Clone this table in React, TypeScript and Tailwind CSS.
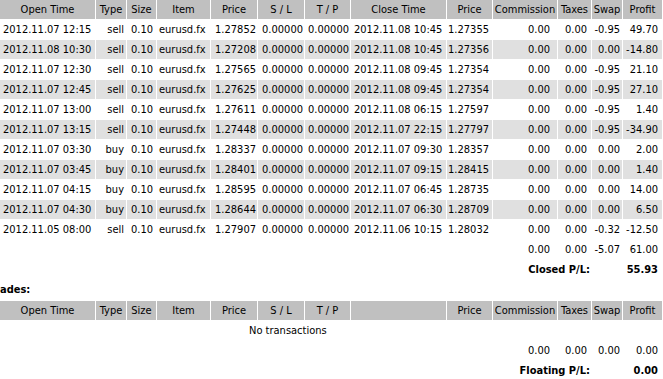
const cols =
  'grid grid-cols-[95px_30px_29px_53px_46px_46px_45px_95px_45px_64px_33px_30px_39px] gap-[1px]'

const headers = [
  'Open Time',
  'Type',
  'Size',
  'Item',
  'Price',
  'S / L',
  'T / P',
  'Close Time',
  'Price',
  'Commission',
  'Taxes',
  'Swap',
  'Profit'
]

// open, type, open price, close time, close price, swap, profit
const closed: string[][] = [
  ['2012.11.07 12:15', 'sell', '1.27852', '2012.11.08 10:45', '1.27355', '-0.95', '49.70'],
  ['2012.11.08 10:30', 'sell', '1.27208', '2012.11.08 10:45', '1.27356', '0.00', '-14.80'],
  ['2012.11.07 12:30', 'sell', '1.27565', '2012.11.08 09:45', '1.27354', '-0.95', '21.10'],
  ['2012.11.07 12:45', 'sell', '1.27625', '2012.11.08 09:45', '1.27354', '-0.95', '27.10'],
  ['2012.11.07 13:00', 'sell', '1.27611', '2012.11.08 06:15', '1.27597', '-0.95', '1.40'],
  ['2012.11.07 13:15', 'sell', '1.27448', '2012.11.07 22:15', '1.27797', '-0.95', '-34.90'],
  ['2012.11.07 03:30', 'buy', '1.28337', '2012.11.07 09:30', '1.28357', '0.00', '2.00'],
  ['2012.11.07 03:45', 'buy', '1.28401', '2012.11.07 09:15', '1.28415', '0.00', '1.40'],
  ['2012.11.07 04:15', 'buy', '1.28595', '2012.11.07 06:45', '1.28735', '0.00', '14.00'],
  ['2012.11.07 04:30', 'buy', '1.28644', '2012.11.07 06:30', '1.28709', '0.00', '6.50'],
  ['2012.11.05 08:00', 'sell', '1.27907', '2012.11.06 10:15', '1.28032', '-0.32', '-12.50']
]

const cell = 'h-[19px] leading-[19px] whitespace-nowrap overflow-hidden'

function HeaderRow({ blankClose }: { blankClose?: boolean }) {
  return (
    <>
      {headers.map((h, i) => (
        <div key={i} className={`${cell} bg-[#c0c0c0] text-center`}>
          {blankClose && i === 7 ? '' : h}
        </div>
      ))}
    </>
  )
}

function TotalsRow({ swap, profit }: { swap: string; profit: string }) {
  return (
    <>
      <div className={`${cell} col-span-9`} />
      <div className={`${cell} pr-[7px] text-right`}>0.00</div>
      <div className={`${cell} pr-[4px] text-right`}>0.00</div>
      <div className={`${cell} pr-[2px] text-right`}>{swap}</div>
      <div className={`${cell} pr-[4px] text-right`}>{profit}</div>
    </>
  )
}

function ResultRow({ label, value }: { label: string; value: string }) {
  return (
    <>
      <div className={`${cell} col-span-11 pr-[1px] text-right font-bold`}>{label}</div>
      <div className={`${cell} col-span-2 pr-[4px] text-right font-bold`}>{value}</div>
    </>
  )
}

export default function App() {
  return (
    <div
      className="h-[379px] w-[663px] overflow-hidden bg-white text-[11px] text-black"
      style={{ fontFamily: '"DejaVu Sans Condensed", "Liberation Sans", sans-serif' }}
    >
      {/* Closed transactions */}
      <div className={cols}>
        <HeaderRow />
        {closed.map((r, i) => {
          const bg = i % 2 === 1 ? 'bg-[#e0e0e0]' : 'bg-white'
          return (
            <div key={i} className="contents">
              <div className={`${cell} ${bg} pl-[3px]`}>{r[0]}</div>
              <div className={`${cell} ${bg} pr-[2px] text-right`}>{r[1]}</div>
              <div className={`${cell} ${bg} pr-[3px] text-right`}>0.10</div>
              <div className={`${cell} ${bg} pl-[2px]`}>eurusd.fx</div>
              <div className={`${cell} ${bg} pr-[1px] text-right`}>{r[2]}</div>
              <div className={`${cell} ${bg} pr-[1px] text-right`}>0.00000</div>
              <div className={`${cell} ${bg} pr-[1px] text-right`}>0.00000</div>
              <div className={`${cell} ${bg} pl-[3px]`}>{r[3]}</div>
              <div className={`${cell} ${bg} pr-[3px] text-right`}>{r[4]}</div>
              <div className={`${cell} ${bg} pr-[7px] text-right`}>0.00</div>
              <div className={`${cell} ${bg} pr-[4px] text-right`}>0.00</div>
              <div className={`${cell} ${bg} pr-[2px] text-right`}>{r[5]}</div>
              <div className={`${cell} ${bg} pr-[4px] text-right`}>{r[6]}</div>
            </div>
          )
        })}
        <TotalsRow swap="-5.07" profit="61.00" />
        <ResultRow label="Closed P/L:" value="55.93" />
      </div>

      <div className="mt-[1px] flex h-[20px] items-center font-bold">ades:</div>

      {/* Open trades */}
      <div className={`${cols} mt-[1px]`}>
        <HeaderRow blankClose />
        <div className={`${cell} col-span-13 pl-[249px]`}>No transactions</div>
        <TotalsRow swap="0.00" profit="0.00" />
        <ResultRow label="Floating P/L:" value="0.00" />
      </div>
    </div>
  )
}
